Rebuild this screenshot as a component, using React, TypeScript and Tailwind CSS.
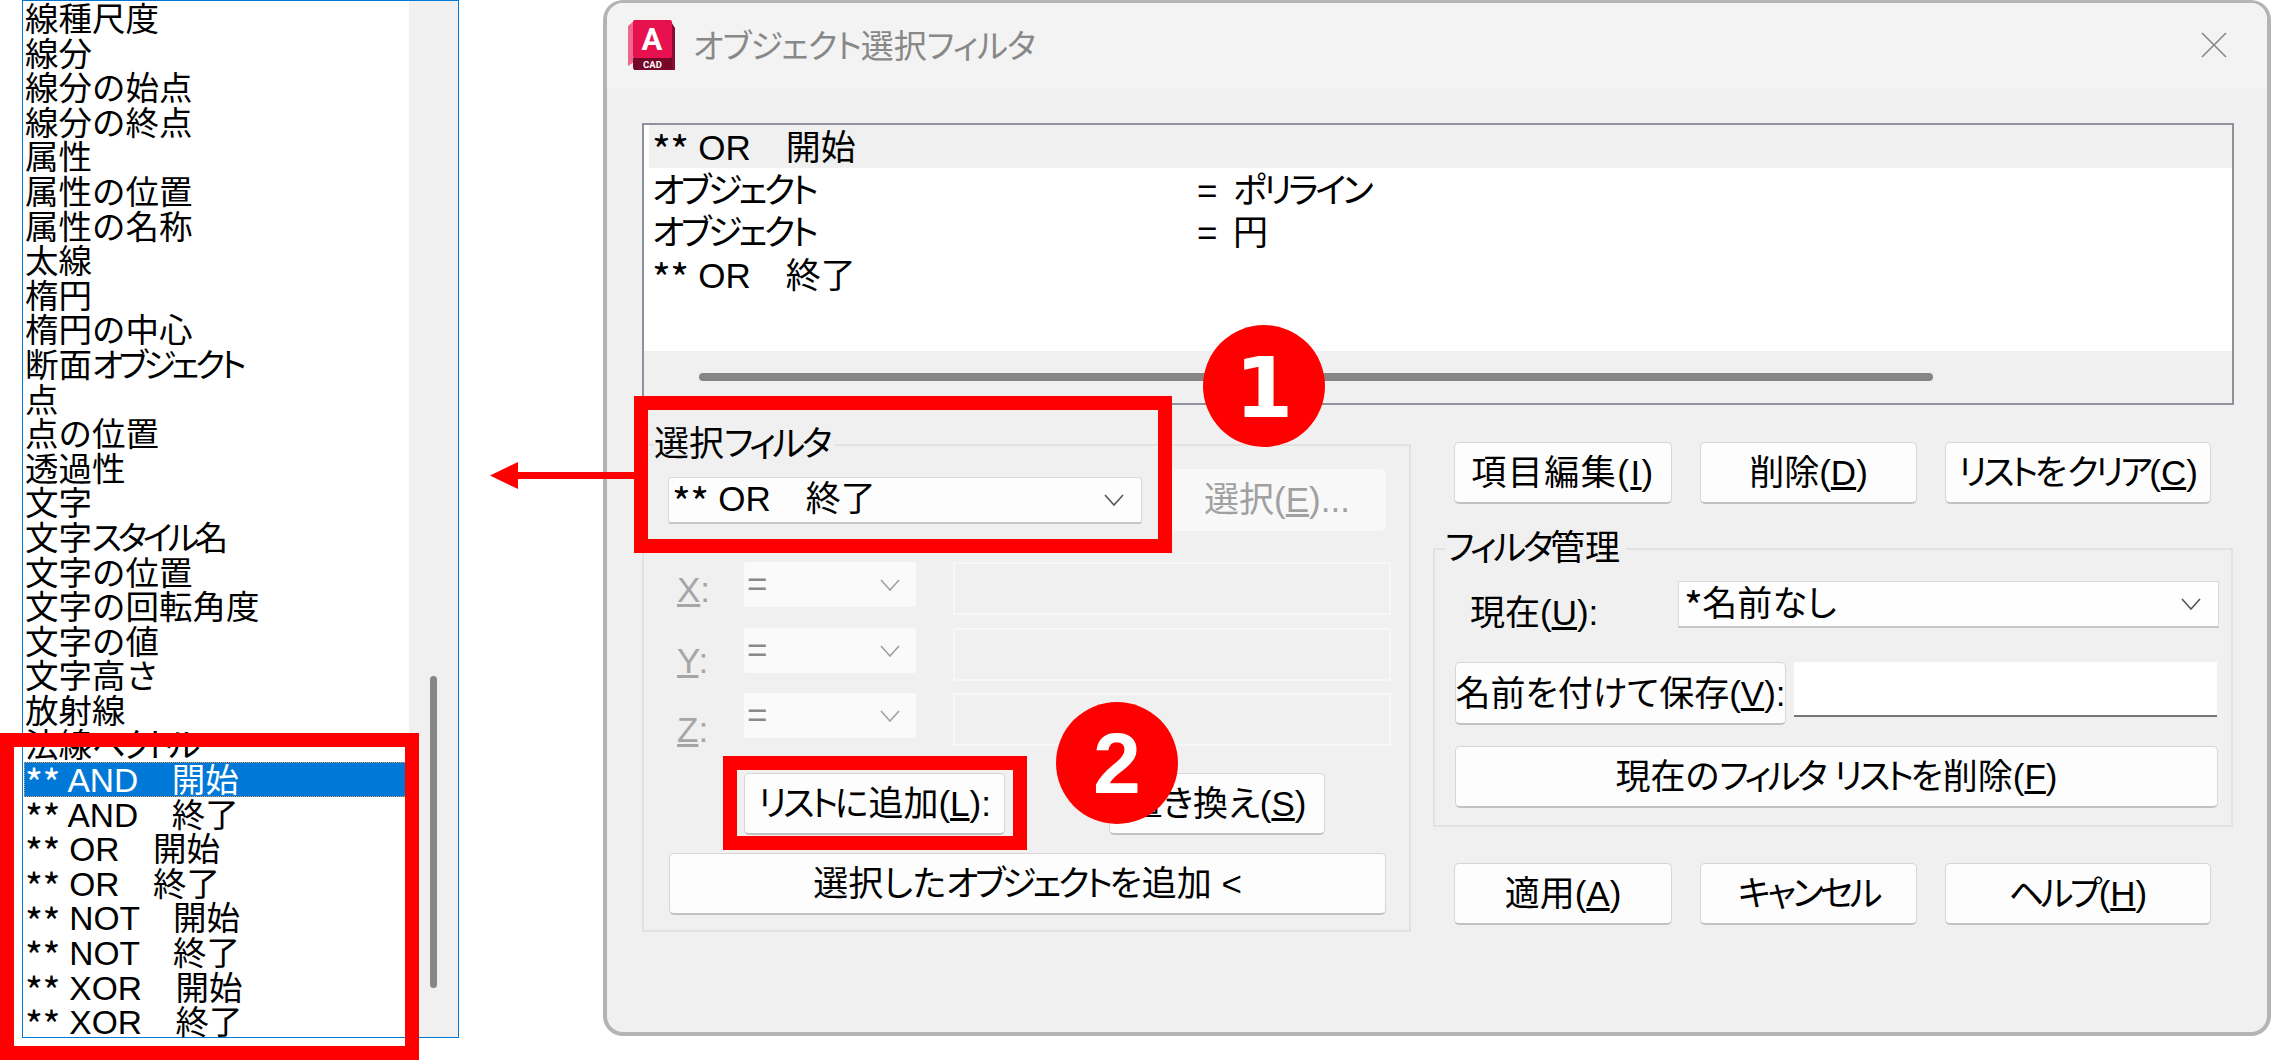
import type { ReactNode } from 'react';

const LIST_ITEMS = [
  '線種尺度', '線分', '線分の始点', '線分の終点', '属性', '属性の位置', '属性の名称', '太線', '楕円', '楕円の中心',
  '断面オブジェクト', '点', '点の位置', '透過性', '文字', '文字スタイル名', '文字の位置', '文字の回転角度', '文字の値', '文字高さ',
  '放射線', '法線ベクトル', '** AND　開始', '** AND　終了', '** OR　開始', '** OR　終了', '** NOT　開始', '** NOT　終了', '** XOR　開始', '** XOR　終了',
];

// the reference font has narrow katakana and wide asterisks, so split text into runs
function fit(text: string, kanaClass = 'tracking-[-0.1em]', hiraClass = '') {
  return text.split(/(\*+|[\u30A0-\u30FF]+|[\u3040-\u309F]+)/).map((part, i) => {
    if (!part) return null;
    if (part[0] === '*') return <span key={i} className="relative top-[0.16em] font-['Noto_Sans_CJK_JP',sans-serif] text-[1.15em] leading-[0] tracking-[-0.5px]">{part}</span>;
    if (/[\u30A0-\u30FF]/.test(part[0])) return <span key={i} className={kanaClass}>{part}</span>;
    if (/[\u3040-\u309F]/.test(part[0])) return <span key={i} className={hiraClass}>{part}</span>;
    return part;
  });
}

function Chevron({ color = '#555555' }: { color?: string }) {
  return (
    <svg width="20" height="12" viewBox="0 0 20 12" fill="none" stroke={color} strokeWidth="1.6">
      <polyline points="1,1 10,11 19,1" />
    </svg>
  );
}

function Button({ className = '', children }: { className?: string; children: ReactNode }) {
  return (
    <div className={`flex h-[62px] items-center justify-center whitespace-nowrap rounded-[5px] border border-b-2 border-[#d6d6d6] border-b-[#c2c2c2] bg-[#fdfdfd] text-[35px] leading-none text-black ${className}`}>
      <span>{children}</span>
    </div>
  );
}

function AxisRow({ axis, className = '', labelClass = '' }: { axis: string; className?: string; labelClass?: string }) {
  return (
    <div className={`flex h-[53px] items-start pl-[33px] ${className}`}>
      <span className={`w-[67px] text-[35px] leading-[40px] text-[#a6a6a6] ${labelClass}`}><u>{axis}</u>:</span>
      <div className="flex h-[45px] w-[172px] items-center justify-between rounded-[3px] bg-[#fafafa] pl-[3px] pr-[16px] text-[35px] text-[#8a8a8a]">
        <span>=</span>
        <Chevron color="#a0a0a0" />
      </div>
      <div className="ml-[37px] h-[53px] w-[438px] border-2 border-[#f7f7f7]" />
    </div>
  );
}

function AutocadLogo() {
  return (
    <svg width="47" height="50" viewBox="0 0 47 50" className="shrink-0">
      <path d="M0 6 L6 1 L6 42 L0 46 Z" fill="#f0668f" />
      <path d="M6 0 H42 L47 8 V50 H6 Z" fill="#8a0b36" />
      <rect x="5" y="0" width="39" height="38" rx="2" fill="#e8114f" />
      <path d="M5 38 H44 V49 Q44 50 42 50 H8 Q5 50 5 47 Z" fill="#750828" />
      <text x="24" y="30" textAnchor="middle" fill="#fff" fontSize="31" fontWeight="700" fontFamily="Roboto, sans-serif">A</text>
      <text x="24.5" y="48" textAnchor="middle" fill="#fff" fontSize="9.5" fontWeight="700" fontFamily="Roboto, sans-serif">CAD</text>
    </svg>
  );
}

export default function App() {
  return (
    <div className="relative flex h-[1060px] w-[2273px] items-start overflow-hidden bg-white font-['Liberation_Sans','Noto_Sans_CJK_JP',sans-serif] text-black [font-feature-settings:'palt']">
      {/* left list */}
      <div className="ml-[22px] flex h-[1038px] w-[437px] border border-[#0078d7]">
        <div className="flex-1 pl-[1px]">
          {LIST_ITEMS.map((item, i) => (
            <div
              key={item}
              className={`h-[34.6px] whitespace-nowrap pl-[1px] pt-[3px] text-[33.5px] leading-[31.6px] ${i === 22 ? 'bg-[#0078d7] text-white outline-1 -outline-offset-1 outline-dotted outline-[#e89a4c]' : ''}`}
            >
              {fit(item, 'tracking-[-0.13em]', '[font-feature-settings:normal]')}
            </div>
          ))}
        </div>
        <div className="w-[49px] bg-[#f0f0f0] pl-[21px] pt-[675px]">
          <div className="h-[312px] w-[7px] rounded-full bg-[#868686]" />
        </div>
      </div>

      {/* dialog */}
      <div className="ml-[144px] h-[1036px] w-[1668px] rounded-[20px] border-[4px] border-t-[3px] border-[#b4b4b4] bg-[#f0f0f0]">
        <div className="flex h-[86px] items-start rounded-t-[16px] bg-[#f3f3f3] pl-[21px] pr-[40px] pt-[17px]">
          <AutocadLogo />
          <span className="ml-[18px] mt-[5px] text-[33px] leading-[44px] text-[#888888]">{fit('オブジェクト選択フィルタ', 'tracking-[-0.03em]')}</span>
          <svg width="26" height="26" viewBox="0 0 26 26" className="ml-auto mt-[12px]" stroke="#858585" strokeWidth="1.6">
            <line x1="1" y1="1" x2="25" y2="25" />
            <line x1="25" y1="1" x2="1" y2="25" />
          </svg>
        </div>

        {/* filter list */}
        <div className="ml-[35px] mt-[34px] flex h-[282px] w-[1592px] flex-col border-2 border-[#8d929c] bg-white">
          <div className="h-[226px] pl-[5px] text-[35px] leading-[39.5px]">
            <div className="h-[42.5px] bg-[#f0f0f0] pl-[3px] pt-[3px]">{fit('** OR　開始')}</div>
            <div className="flex h-[42.5px] pl-[3px] pt-[3px]"><span className="w-[545px]">{fit('オブジェクト')}</span><span className="w-[36px]">=</span><span>{fit('ポリライン')}</span></div>
            <div className="flex h-[42.5px] pl-[3px] pt-[3px]"><span className="w-[545px]">{fit('オブジェクト')}</span><span className="w-[36px]">=</span><span>円</span></div>
            <div className="h-[42.5px] pl-[3px] pt-[3px]">{fit('** OR　終了')}</div>
          </div>
          <div className="flex-1 bg-[#f0f0f0] pl-[55px] pt-[22px]">
            <div className="h-[8px] w-[1234px] rounded-full bg-[#868686]" />
          </div>
        </div>

        <div className="ml-[35px] mt-[39px] flex items-start gap-[22px]">
          {/* selection filter group */}
          <div className="relative h-[488px] w-[769px] border-2 border-[#e2e2e2] pt-[23px]">
            <span className="absolute left-[10px] top-[-24px] bg-[#f0f0f0] pr-[6px] text-[35px] leading-[44px]">{fit('選択フィルタ')}</span>
            <div className="flex h-[62px] items-center pl-[24px]">
              <div className="flex h-[47px] w-[474px] items-center justify-between rounded-[3px] border border-b-2 border-[#dadada] border-b-[#c6c6c6] bg-[#fdfdfd] pl-[3px] pr-[17px] text-[35px]">
                <span>{fit('** OR　終了')}</span>
                <Chevron />
              </div>
              <div className="ml-[26px] flex h-[62px] w-[218px] items-center justify-center rounded-[5px] bg-[#f8f8f8] text-[35px] text-[#a0a0a0]">選択(<u>E</u>)...</div>
            </div>
            <AxisRow axis="X" className="mt-[31px]" labelClass="mt-[8px]" />
            <AxisRow axis="Y" className="mt-[13px]" labelClass="mt-[13px]" />
            <AxisRow axis="Z" className="mt-[12px]" labelClass="mt-[17px]" />
            <div className="mt-[27px] flex pl-[100px]">
              <Button className="w-[261px]">{fit('リストに追加')}(<u>L</u>):</Button>
              <Button className="ml-[104px] w-[216px]">置き換え(<u>S</u>)</Button>
            </div>
            <Button className="ml-[25px] mt-[18px] w-[717px]">{fit('選択したオブジェクトを追加')} &lt;</Button>
          </div>

          {/* right column */}
          <div className="-mt-[2px] w-[800px]">
            <div className="flex gap-[28px] pl-[21px]">
              <Button className="w-[218px] tracking-[1.5px]">項目編集(<u>I</u>)</Button>
              <Button className="w-[217px]">削除(<u>D</u>)</Button>
              <Button className="w-[266px]">{fit('リストをクリア')}(<u>C</u>)</Button>
            </div>
            <div className="relative mt-[44px] h-[279px] border-2 border-[#e2e2e2] pl-[20px] pt-[31px]">
              <span className="absolute left-[10px] top-[-24px] bg-[#f0f0f0] pr-[6px] text-[35px] leading-[44px]">{fit('フィルタ管理')}</span>
              <div className="flex h-[47px] items-start">
                <span className="ml-[15px] mt-[10px] w-[208px] text-[35px] leading-[44px]">現在(<u>U</u>):</span>
                <div className="flex h-[47px] w-[541px] items-center justify-between border border-b-2 border-[#dadada] border-b-[#c6c6c6] bg-[#fefefe] pl-[5px] pr-[17px] text-[35px]">
                  <span>{fit('*名前なし')}</span>
                  <Chevron />
                </div>
              </div>
              <div className="mt-[34px] flex items-start">
                <Button className="h-[63px] w-[331px]">{fit('名前を付けて保存')}(<u>V</u>):</Button>
                <div className="ml-[8px] h-[55px] w-[423px] border-b-2 border-[#777777] bg-white" />
              </div>
              <Button className="mt-[21px] w-[763px]">{fit('現在のフィルタ リストを削除')}(<u>F</u>)</Button>
            </div>
            <div className="mt-[36px] flex gap-[28px] pl-[21px]">
              <Button className="w-[218px]">適用(<u>A</u>)</Button>
              <Button className="w-[217px]">{fit('キャンセル')}</Button>
              <Button className="w-[266px]">{fit('ヘルプ')}(<u>H</u>)</Button>
            </div>
          </div>
        </div>
      </div>

      {/* callouts over the screenshot */}
      <div className="absolute left-0 top-[733px] h-[327px] w-[419px] border-[14px] border-[#ff0000]" />
      <div className="absolute left-[634px] top-[396px] h-[157px] w-[538px] border-[14px] border-[#ff0000]" />
      <div className="absolute left-[723px] top-[756px] h-[94px] w-[304px] border-[14px] border-[#ff0000]" />
      <div className="absolute left-[518px] top-[472px] h-[7px] w-[116px] bg-[#ff0000]" />
      <svg width="28" height="27" viewBox="0 0 28 27" className="absolute left-[490px] top-[462px]">
        <polygon points="0,13.5 28,0 28,27" fill="#ff0000" />
      </svg>
      <div className="absolute left-[1203px] top-[325px] flex h-[122px] w-[122px] items-center justify-center rounded-full bg-[#ff0000] pt-[3px] font-['DejaVu_Sans',sans-serif] text-[84px] font-bold leading-none text-white">1</div>
      <div className="absolute left-[1056px] top-[702px] flex h-[122px] w-[122px] items-center justify-center rounded-full bg-[#ff0000] font-['Liberation_Sans',sans-serif] text-[86px] font-bold leading-none text-white">2</div>
    </div>
  );
}
